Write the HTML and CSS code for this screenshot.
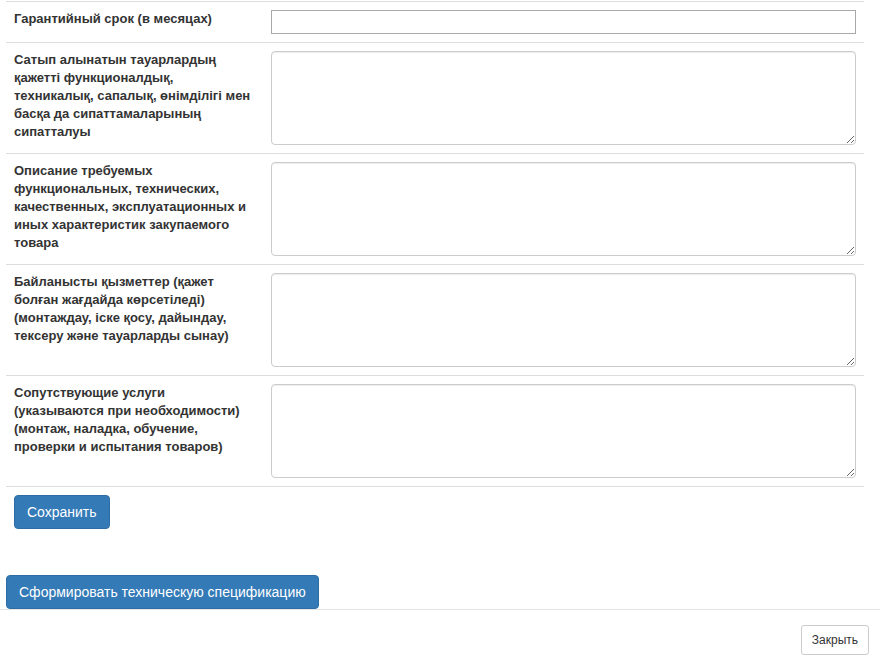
FILE: index.html
```html
<!DOCTYPE html>
<html lang="ru">
<head>
    <meta charset="UTF-8">
    <title>Техническая спецификация</title>
    <link rel="stylesheet" href="styles.css">
</head>
<body>
    <div class="modal-body">
        <table class="spec-table">
            <tr>
                <th>Гарантийный срок (в месяцах)</th>
                <td><input type="text" class="plain-input"></td>
            </tr>
            <tr>
                <th>Сатып алынатын тауарлардың қажетті функционалдық, техникалық, сапалық, өнімділігі мен басқа да сипаттамаларының сипатталуы</th>
                <td><textarea class="form-control"></textarea></td>
            </tr>
            <tr>
                <th>Описание требуемых функциональных, технических, качественных, эксплуатационных и иных характеристик закупаемого товара</th>
                <td><textarea class="form-control"></textarea></td>
            </tr>
            <tr>
                <th>Байланысты қызметтер (қажет болған жағдайда көрсетіледі) (монтаждау, іске қосу, дайындау, тексеру және тауарларды сынау)</th>
                <td><textarea class="form-control"></textarea></td>
            </tr>
            <tr>
                <th>Сопутствующие услуги (указываются при необходимости) (монтаж, наладка, обучение, проверки и испытания товаров)</th>
                <td><textarea class="form-control"></textarea></td>
            </tr>
            <tr class="actions">
                <td colspan="2"><button class="btn btn-primary">Сохранить</button></td>
            </tr>
        </table>

        <button class="btn btn-primary btn-generate">Сформировать техническую спецификацию</button>
    </div>

    <div class="modal-footer">
        <button class="btn btn-default btn-sm">Закрыть</button>
    </div>
</body>
</html>
```

FILE: styles.css
```css
* {
    box-sizing: border-box;
}

body {
    margin: 0;
    padding-top: 1px;
    font-family: "Liberation Sans", Arial, sans-serif;
    font-size: 14px;
    color: #333;
    background: #fff;
}

.modal-body {
    padding: 0 16px 0 6px;
}

.spec-table {
    width: 858px;
    border-collapse: collapse;
    border-spacing: 0;
}

.spec-table th,
.spec-table td {
    padding: 8px;
    vertical-align: top;
    border-top: 1px solid #ddd;
}

.spec-table th {
    width: 257px;
    text-align: left;
    font-size: 13px;
    font-weight: bold;
    line-height: 18px;
}

.spec-table tr:last-child td {
    padding-bottom: 46px;
}

.plain-input {
    display: block;
    width: 100%;
    height: 24px;
    margin: 0;
    padding: 1px 2px;
    border: 1px solid #a9a9a9;
    font: inherit;
}

.form-control {
    display: block;
    width: 100%;
    height: 94px;
    margin: 0;
    padding: 6px 12px;
    border: 1px solid #ccc;
    border-radius: 4px;
    box-shadow: inset 0 1px 1px rgba(0,0,0,0.075);
    font: inherit;
    color: #555;
}

.btn {
    display: inline-block;
    padding: 6px 12px;
    font-family: "Liberation Sans", Arial, sans-serif;
    font-size: 14px;
    line-height: 20px;
    border: 1px solid transparent;
    border-radius: 4px;
    cursor: pointer;
}

.btn-primary {
    color: #fff;
    background: #337ab7;
    border-color: #2e6da4;
}

.btn-default {
    color: #333;
    background: #fff;
    border-color: #ccc;
}

.btn-sm {
    padding: 5px 10px;
    font-size: 12px;
    line-height: 18px;
    border-radius: 3px;
}

.btn-generate {
    display: block;
}

.modal-footer {
    border-top: 1px solid #e5e5e5;
    padding: 15px 11px 15px 15px;
    text-align: right;
}
```
